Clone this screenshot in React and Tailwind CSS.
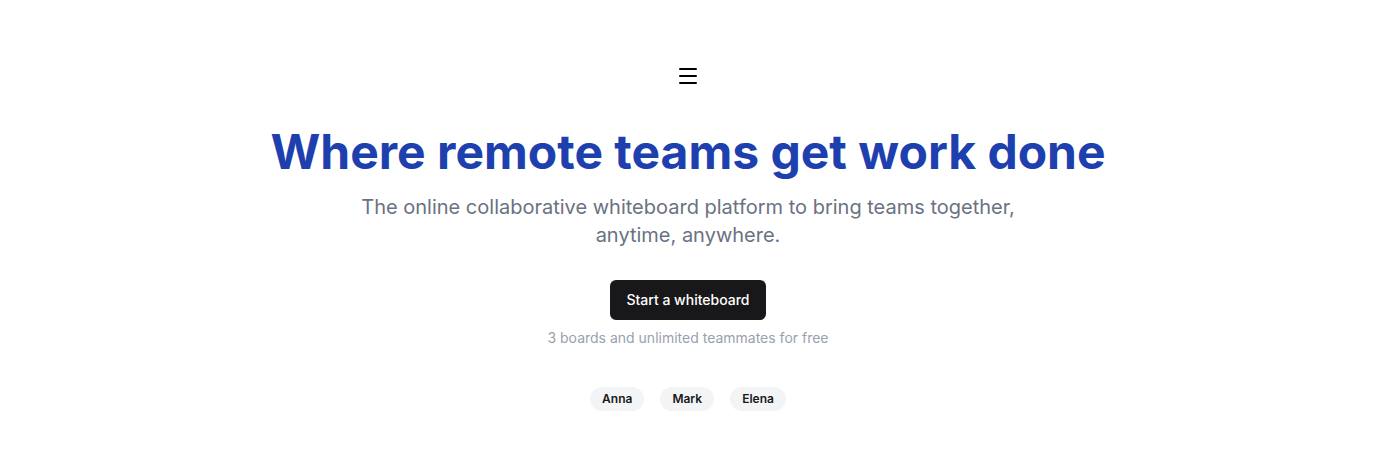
import React from "react";
import { Menu } from "lucide-react";

const PEOPLE = ["Anna", "Mark", "Elena"];

export default function App() {
  return (
    <div className="min-h-screen bg-white font-['Inter',sans-serif]">
      <div className="flex flex-col items-center pt-16 text-center">
        <button className="text-black" aria-label="Menu">
          <Menu size={24} strokeWidth={2} />
        </button>

        <h1 className="mt-[40px] text-5xl font-bold text-[#1e40af]">
          Where remote teams get work done
        </h1>
        <p className="mt-[17px] max-w-2xl text-xl leading-7 text-gray-500">
          The online collaborative whiteboard platform to bring teams together, anytime, anywhere.
        </p>

        <button className="mt-[31px] h-10 rounded-md bg-zinc-900 px-4 text-sm font-medium text-white">
          Start a whiteboard
        </button>
        <p className="mt-2 text-sm text-gray-400">3 boards and unlimited teammates for free</p>

        <div className="mt-[39px] flex gap-4">
          {PEOPLE.map((name) => (
            <span key={name} className="rounded-full bg-gray-100 px-3 py-1 text-xs font-semibold text-zinc-900">
              {name}
            </span>
          ))}
        </div>
      </div>
    </div>
  );
}
